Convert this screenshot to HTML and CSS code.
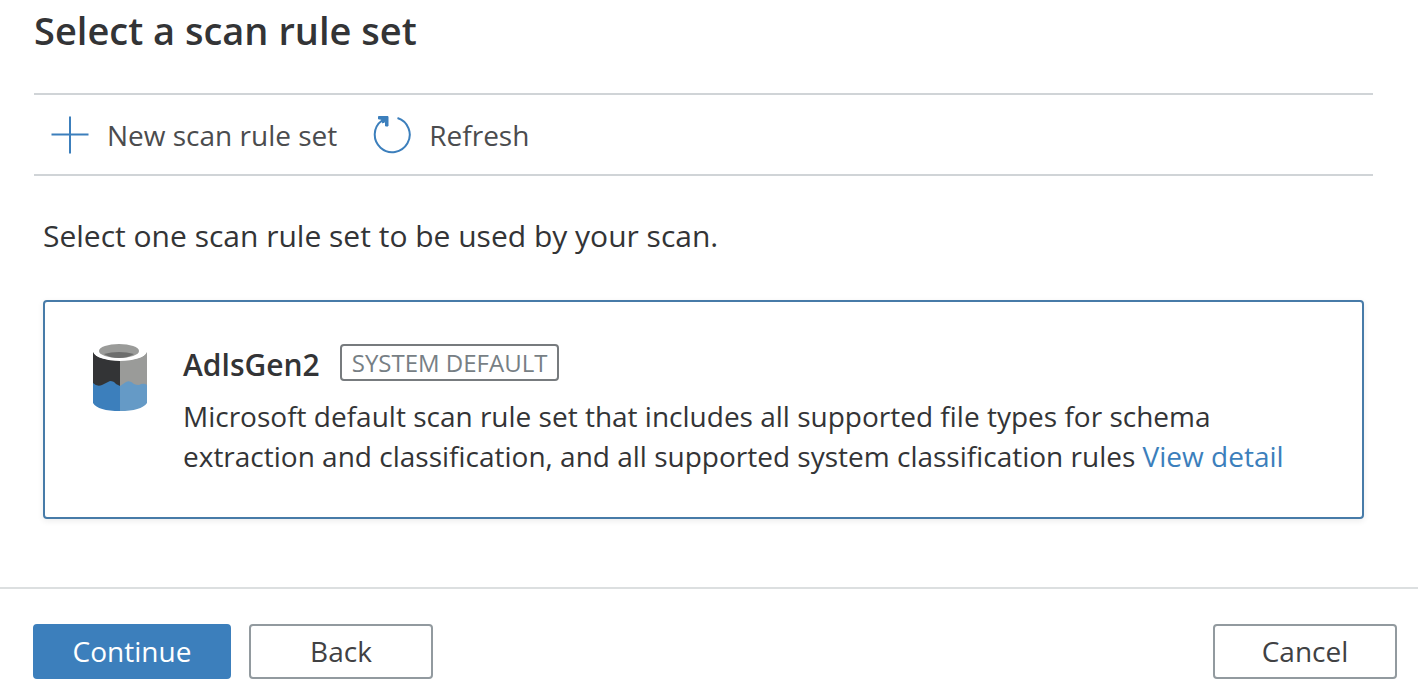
FILE: index.html
```html
<!DOCTYPE html>
<html lang="en">
<head>
<meta charset="utf-8">
<meta name="viewport" content="width=device-width, initial-scale=1">
<title>Select a scan rule set</title>
<link rel="stylesheet" href="styles.css">
</head>
<body>
<main class="content">
  <h1 class="title">Select a scan rule set</h1>
  <div class="toolbar">
    <button class="command" type="button">
      <svg class="command-icon" viewBox="0 0 38 38" aria-hidden="true"><path d="M0.5 18.500H37.5M19 0.5V37.5"/></svg>
      <span>New scan rule set</span>
    </button>
    <button class="command" type="button">
      <svg class="command-icon" viewBox="0 0 38 38" aria-hidden="true"><path d="M24.500 2A17.500 17.500 0 1 1 9 4.500L13.500 1.500"/><path class="arrow" d="M5.500 .5H15V10H12.500V5.500L9.500 7L8 3H5.500Z"/></svg>
      <span>Refresh</span>
    </button>
  </div>
  <p class="intro">Select one scan rule set to be used by your scan.</p>
  <section class="card">
    <svg class="store-icon" viewBox="0 0 54 68" aria-hidden="true">
      <path fill="#333436" d="M0 8Q4 16 27 16V43H0Z"/>
      <path fill="#9a9b99" d="M27 16Q50 16 54 8V43H27Z"/>
      <path fill="#3c7fbc" d="M0 39Q4 43 9 41Q13 39 17 37Q21 37 23 40L27 42V67Q5 67 0 59Z"/>
      <path fill="#659ac6" d="M27 42L33 38Q37 36 41 40Q46 42 48 40Q52 39 54 41V59Q48 67 27 67Z"/>
      <ellipse cx="27" cy="8" rx="26" ry="9" fill="#fff"/>
      <ellipse cx="26" cy="7" rx="20" ry="7" fill="#9a9b99"/>
      <path fill="#6d6e6d" d="M11 10Q18 8 26 8T41 10Q35 14 26 14T11 10Z"/>
    </svg>
    <div class="card-body">
      <div class="card-heading">
        <h2 class="card-title">AdlsGen2</h2>
        <span class="badge">SYSTEM DEFAULT</span>
      </div>
      <p class="description">Microsoft default scan rule set that includes all supported file types for schema extraction and classification, and all supported system classification rules <a class="link" href="#">View detail</a></p>
    </div>
  </section>
</main>
<footer class="footer">
  <button class="button primary" type="button">Continue</button>
  <button class="button" type="button">Back</button>
  <button class="button cancel" type="button">Cancel</button>
</footer>
</body>
</html>
```
FILE: styles.css
```css
* { box-sizing: border-box; }
body {
  margin: 0;
  min-height: 100vh;
  display: flex;
  flex-direction: column;
  background: #fff;
  color: #333436;
  font-family: "Open Sans", "Noto Sans", sans-serif;
  font-size: 28px;
}
button { font: inherit; color: inherit; cursor: pointer; }
.content { flex: 1; padding: 4px 45px 68px 34px; }
.title { margin: 0 0 37px; font-size: 38px; line-height: 52px; font-weight: 600; }
.toolbar {
  display: flex;
  gap: 36px;
  padding: 0 17px;
  border-top: 2px solid #d0d4d7;
  border-bottom: 2px solid #d0d4d7;
}
.command {
  display: flex;
  align-items: center;
  gap: 18px;
  height: 79px;
  padding: 0;
  border: 0;
  background: none;
  color: #4b4c4e;
}
.command-icon { width: 38px; height: 38px; fill: none; stroke: #3c7fbc; stroke-width: 2; }
.arrow { fill: #3c7fbc; stroke-width: 1; }
.intro { margin: 39px 9px 43px; font-size: 30px; line-height: 42px; }
.card {
  display: flex;
  gap: 36px;
  margin: 0 9px;
  padding: 42px 48px 41px;
  border: 2px solid #477ba8;
  border-radius: 4px;
  box-shadow: 0 2px 6px rgba(0, 0, 0, 0.08);
}
.store-icon { flex: none; width: 54px; height: 68px; }
.card-heading { display: flex; align-items: flex-start; gap: 20px; margin-bottom: 10px; }
.card-title { margin: 0; font-size: 30px; line-height: 42px; font-weight: 600; }
.badge {
  padding: 0 10px;
  border: 2px solid #777b7e;
  border-radius: 4px;
  color: #777f85;
  font-size: 24px;
  line-height: 33px;
}
.description { margin: 0; line-height: 40px; }
.link { color: #3c7fbc; text-decoration: none; }
.footer {
  display: flex;
  gap: 18px;
  padding: 35px 21px 21px 33px;
  border-top: 2px solid #dcdfe0;
}
.button {
  width: 184px;
  height: 55px;
  padding: 0 0 2px;
  border: 2px solid #929a9f;
  border-radius: 4px;
  background: #fff;
  color: #404143;
}
.primary { width: 198px; border-color: #3c7fbc; background: #3c7fbc; color: #fff; }
.cancel { margin-left: auto; }
```
